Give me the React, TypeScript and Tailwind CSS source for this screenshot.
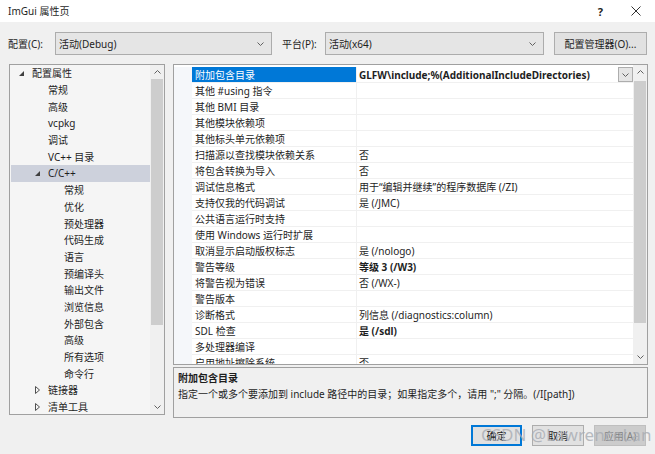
import React from "react"

type TreeItem = { label: string; level: number; arrow?: "open" | "closed"; selected?: boolean }

const tree: TreeItem[] = [
  { label: "配置属性", level: 0, arrow: "open" },
  { label: "常规", level: 1 },
  { label: "高级", level: 1 },
  { label: "vcpkg", level: 1 },
  { label: "调试", level: 1 },
  { label: "VC++ 目录", level: 1 },
  { label: "C/C++", level: 1, arrow: "open", selected: true },
  { label: "常规", level: 2 },
  { label: "优化", level: 2 },
  { label: "预处理器", level: 2 },
  { label: "代码生成", level: 2 },
  { label: "语言", level: 2 },
  { label: "预编译头", level: 2 },
  { label: "输出文件", level: 2 },
  { label: "浏览信息", level: 2 },
  { label: "外部包含", level: 2 },
  { label: "高级", level: 2 },
  { label: "所有选项", level: 2 },
  { label: "命令行", level: 2 },
  { label: "链接器", level: 1, arrow: "closed" },
  { label: "清单工具", level: 1, arrow: "closed" },
]

const indent = ["pl-[8px]", "pl-[24px]", "pl-[40px]"]

type Prop = { name: string; value?: string; bold?: boolean; selected?: boolean }

const props: Prop[] = [
  { name: "附加包含目录", value: "GLFW\\include;%(AdditionalIncludeDirectories)", bold: true, selected: true },
  { name: "其他 #using 指令" },
  { name: "其他 BMI 目录" },
  { name: "其他模块依赖项" },
  { name: "其他标头单元依赖项" },
  { name: "扫描源以查找模块依赖关系", value: "否" },
  { name: "将包含转换为导入", value: "否" },
  { name: "调试信息格式", value: "用于“编辑并继续”的程序数据库 (/ZI)" },
  { name: "支持仅我的代码调试", value: "是 (/JMC)" },
  { name: "公共语言运行时支持" },
  { name: "使用 Windows 运行时扩展" },
  { name: "取消显示启动版权标志", value: "是 (/nologo)" },
  { name: "警告等级", value: "等级 3 (/W3)", bold: true },
  { name: "将警告视为错误", value: "否 (/WX-)" },
  { name: "警告版本" },
  { name: "诊断格式", value: "列信息 (/diagnostics:column)" },
  { name: "SDL 检查", value: "是 (/sdl)", bold: true },
  { name: "多处理器编译" },
  { name: "启用地址擦除系统", value: "否" },
]

function Chevron({ up = false }: { up?: boolean }) {
  return (
    <svg width="7" height="4" viewBox="0 0 7 4" className={up ? "rotate-180" : ""}>
      <polyline points="0.5,0.5 3.5,3.5 6.5,0.5" fill="none" stroke="#606060" strokeWidth="1" />
    </svg>
  )
}

function Select({ value, width }: { value: string; width: string }) {
  return (
    <div className={`flex h-[23px] items-center justify-between border border-[#acacac] bg-[#e5e5e5] pl-[3px] pr-[7px] ${width}`}>
      <span>{value}</span>
      <Chevron />
    </div>
  )
}

function Scrollbar({ thumbTop, thumbHeight }: { thumbTop: string; thumbHeight: string }) {
  return (
    <div className="flex h-full w-[14px] flex-col bg-[#f0f0f0]">
      <div className="flex h-[14px] items-center justify-center">
        <Chevron up />
      </div>
      <div className={`mx-auto w-[12px] bg-[#cdcdcd] ${thumbTop} ${thumbHeight}`} />
      <div className="flex-1" />
      <div className="flex h-[14px] items-center justify-center">
        <Chevron />
      </div>
    </div>
  )
}

export default function App() {
  return (
    <div
      className="relative h-[454px] w-[655px] overflow-hidden bg-[#f0f0f0] text-[10px] leading-none text-[#1e1e1e]"
      style={{ fontFamily: '"Noto Sans", "Noto Sans CJK SC", sans-serif' }}
    >
      {/* title bar */}
      <div className="flex h-[22px] items-center bg-white pl-[8px]">
        <span>ImGui 属性页</span>
        <div className="ml-auto flex items-center">
          <span className="mr-[28px] text-[11px] font-bold">?</span>
          <svg width="10" height="10" viewBox="0 0 10 10" className="mr-[14px]">
            <path d="M0.5 0.5L9.5 9.5M9.5 0.5L0.5 9.5" stroke="#333" strokeWidth="1" />
          </svg>
        </div>
      </div>

      {/* config row */}
      <div className="mt-[10px] flex items-center pl-[8px]">
        <span className="w-[47px]">配置(C):</span>
        <Select value="活动(Debug)" width="w-[217px]" />
        <span className="ml-[10px] w-[43px]">平台(P):</span>
        <Select value="活动(x64)" width="w-[219px]" />
        <div className="ml-[10px] flex h-[23px] w-[93px] items-center justify-center border border-[#adadad] bg-[#e1e1e1]">
          配置管理器(O)...
        </div>
      </div>

      {/* main */}
      <div className="mt-[9px] flex gap-[8px] pl-[9px]">
        {/* tree */}
        <div className="flex h-[351px] w-[156px] border border-[#a0a0a0] bg-[#f5f5f5]">
          <div className="flex-1 overflow-hidden pl-[1px]">
            {tree.map((t, i) => (
              <div
                key={i}
                className={`flex h-[16.7px] items-center ${indent[t.level]} ${t.selected ? "bg-[#cdd1dc]" : ""}`}
              >
                <span className="flex w-[13px] items-center">
                  {t.arrow === "open" && (
                    <svg width="5" height="5" viewBox="0 0 5 5">
                      <polygon points="5,0 5,5 0,5" fill="#404040" />
                    </svg>
                  )}
                  {t.arrow === "closed" && (
                    <svg width="5" height="8" viewBox="0 0 5 8">
                      <polygon points="0.5,0.5 4.5,4 0.5,7.5" fill="none" stroke="#505050" strokeWidth="1" />
                    </svg>
                  )}
                </span>
                <span>{t.label}</span>
              </div>
            ))}
          </div>
          <Scrollbar thumbTop="mt-0" thumbHeight="h-[246px]" />
        </div>

        {/* right side */}
        <div className="flex w-[475px] flex-col">
          <div className="flex h-[301px] border border-[#a0a0a0] bg-white">
            <div className="flex-1 overflow-hidden pt-[2px]">
              {props.map((p, i) => (
                <div key={i} className="flex h-[16px]">
                  <div className="w-[18px] bg-[#f5f7fa]" />
                  <div
                    className={`flex w-[165px] items-center border-b border-r border-[#f0f0f0] pl-[3px] ${
                      p.selected ? "bg-[#0078d7] text-white" : ""
                    }`}
                  >
                    {p.name}
                  </div>
                  <div className="flex flex-1 items-center border-b border-[#f0f0f0] pl-[2px]">
                    <span className={p.bold ? "font-bold" : ""}>{p.value}</span>
                    {p.selected && (
                      <div className="ml-auto flex h-[15px] w-[15px] items-center justify-center border border-[#adadad] bg-[#e5e5e5]">
                        <Chevron />
                      </div>
                    )}
                  </div>
                </div>
              ))}
            </div>
            <Scrollbar thumbTop="mt-[2px]" thumbHeight="h-[242px]" />
          </div>

          <div className="mt-[2px] h-[51px] border border-[#a0a0a0] bg-[#f0f0f0] pl-[4px] pt-[5px]">
            <div className="font-bold">附加包含目录</div>
            <div className="mt-[6px]">指定一个或多个要添加到 include 路径中的目录；如果指定多个，请用 ";" 分隔。(/I[path])</div>
          </div>
        </div>
      </div>

      {/* buttons */}
      <div className="mt-[7px] flex justify-end gap-[10px] pr-[9px]">
        <div className="flex h-[21px] w-[51px] items-center justify-center border-2 border-[#0078d7] bg-[#e1e1e1]">确定</div>
        <div className="flex h-[21px] w-[52px] items-center justify-center border border-[#adadad] bg-[#e1e1e1]">取消</div>
        <div className="flex h-[21px] w-[52px] items-center justify-center border border-[#bfbfbf] bg-[#cccccc] text-[#838383]">
          应用(A)
        </div>
      </div>

      {/* watermark */}
      <div className="pointer-events-none absolute left-[481px] top-[426px] text-[17px] text-[#a7abb2]/80">
        CSDN @LawrenceLan
      </div>
    </div>
  )
}
